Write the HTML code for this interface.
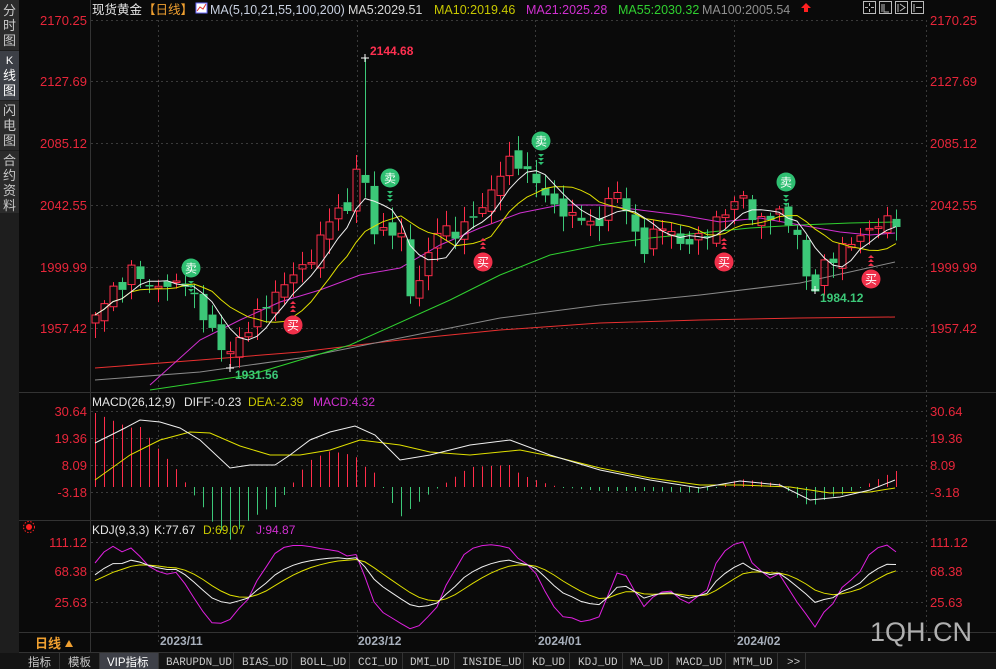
<!DOCTYPE html>
<html><head><meta charset="utf-8"><style>
html,body{margin:0;padding:0;background:#0a0a0a;width:996px;height:669px;overflow:hidden}
svg{display:block}
text{font-family:"Liberation Sans","Noto Sans CJK SC",sans-serif}
text.mono{font-family:"Liberation Mono","DejaVu Sans Mono",monospace}
</style></head><body>
<svg id="s" width="996" height="669" xmlns="http://www.w3.org/2000/svg">
<rect width="996" height="669" fill="#0a0a0a"/>
<rect x="0" y="0" width="19" height="653" fill="#1e1e1e"/>
<rect x="0" y="0" width="19" height="50" fill="#2b2b2b"/>
<rect x="0" y="51" width="19" height="49" fill="#3c3f46"/>
<rect x="0" y="101" width="19" height="49" fill="#2b2b2b"/>
<rect x="0" y="151" width="19" height="62" fill="#2b2b2b"/>
<g fill="#c8c8c8" font-size="13" text-anchor="middle">
<text x="9.5" y="15">分</text><text x="9.5" y="30">时</text><text x="9.5" y="45">图</text>
<text x="9.5" y="64" fill="#fff" font-size="11">K</text><text x="9.5" y="80" fill="#fff">线</text><text x="9.5" y="95" fill="#fff">图</text>
<text x="9.5" y="115">闪</text><text x="9.5" y="130">电</text><text x="9.5" y="145">图</text>
<text x="9.5" y="165">合</text><text x="9.5" y="180">约</text><text x="9.5" y="195">资</text><text x="9.5" y="210">料</text>
</g>
<g stroke="#333" stroke-width="1">
<line x1="90.5" y1="0" x2="90.5" y2="653"/>
<line x1="19" y1="392.5" x2="996" y2="392.5"/>
<line x1="19" y1="520.5" x2="996" y2="520.5"/>
<line x1="19" y1="632.5" x2="996" y2="632.5"/>
<line x1="19" y1="652.5" x2="996" y2="652.5"/>
</g>
<g stroke="#3a3a3a" stroke-dasharray="2,3">
<line x1="91" y1="20.5" x2="925" y2="20.5"/><line x1="91" y1="81.5" x2="925" y2="81.5"/>
<line x1="91" y1="143.5" x2="925" y2="143.5"/><line x1="91" y1="205.5" x2="925" y2="205.5"/>
<line x1="91" y1="267.5" x2="925" y2="267.5"/><line x1="91" y1="328.5" x2="925" y2="328.5"/>
<line x1="91" y1="411.5" x2="925" y2="411.5"/><line x1="91" y1="438.5" x2="925" y2="438.5"/>
<line x1="91" y1="465.5" x2="925" y2="465.5"/><line x1="91" y1="492.5" x2="925" y2="492.5"/>
<line x1="91" y1="542.5" x2="925" y2="542.5"/><line x1="91" y1="571.5" x2="925" y2="571.5"/>
<line x1="91" y1="602.5" x2="925" y2="602.5"/>
<line x1="158.5" y1="20" x2="158.5" y2="645"/><line x1="357.5" y1="20" x2="357.5" y2="645"/>
<line x1="535.5" y1="20" x2="535.5" y2="645"/><line x1="734.5" y1="20" x2="734.5" y2="645"/>
<line x1="926.5" y1="20" x2="926.5" y2="632"/>
</g>
<g fill="#e8263a" font-size="13" text-anchor="end">
<text x="87" y="25">2170.25</text><text x="87" y="86">2127.69</text><text x="87" y="148">2085.12</text>
<text x="87" y="210">2042.55</text><text x="87" y="272">1999.99</text><text x="87" y="333">1957.42</text>
<text x="87" y="416">30.64</text><text x="87" y="443">19.36</text><text x="87" y="470">8.09</text><text x="87" y="497">-3.18</text>
<text x="87" y="547">111.12</text><text x="87" y="576">68.38</text><text x="87" y="607">25.63</text>
</g>
<g fill="#e8263a" font-size="13">
<text x="930" y="25">2170.25</text><text x="930" y="86">2127.69</text><text x="930" y="148">2085.12</text>
<text x="930" y="210">2042.55</text><text x="930" y="272">1999.99</text><text x="930" y="333">1957.42</text>
<text x="930" y="416">30.64</text><text x="930" y="443">19.36</text><text x="930" y="470">8.09</text><text x="930" y="497">-3.18</text>
<text x="930" y="547">111.12</text><text x="930" y="576">68.38</text><text x="930" y="607">25.63</text>
</g>
<g font-size="12.5">
<text x="92" y="14" fill="#e6e6e6">现货黄金</text>
<text x="143" y="14" fill="#f0a030">【日线】</text>
<rect x="196" y="3" width="11" height="10" fill="#fff" stroke="#6a6aff"/>
<polyline points="197,11 200,7 203,9 206,4" stroke="#e03030" fill="none"/>
<text x="210" y="14" fill="#c8d0e0">MA(5,10,21,55,100,200)</text>
<text x="348" y="14" fill="#d8d8d8">MA5:2029.51</text>
<text x="434" y="14" fill="#c8c800">MA10:2019.46</text>
<text x="526" y="14" fill="#d030d0">MA21:2025.28</text>
<text x="618" y="14" fill="#30d030">MA55:2030.32</text>
<text x="702" y="14" fill="#909090">MA100:2005.54</text>
</g>
<g font-size="12">
<text x="92" y="406" fill="#e6e6e6">MACD(26,12,9)</text>
<text x="184" y="406" fill="#e6e6e6">DIFF:-0.23</text>
<text x="248" y="406" fill="#c8c800">DEA:-2.39</text>
<text x="313" y="406" fill="#d030d0">MACD:4.32</text>
<text x="92" y="534" fill="#e6e6e6">KDJ(9,3,3)</text>
<text x="154" y="534" fill="#e6e6e6">K:77.67</text>
<text x="203" y="534" fill="#c8c800">D:69.07</text>
<text x="256" y="534" fill="#d030d0">J:94.87</text>
</g>
<path d="M806,3 L801,8 L804,8 L804,12 L808,12 L808,8 L811,8 Z" fill="#ff2020"/>
<g stroke="#bbb" fill="none">
<rect x="863.5" y="1.5" width="12" height="12"/><rect x="879.5" y="1.5" width="12" height="12"/>
<rect x="895.5" y="1.5" width="12" height="12"/><rect x="911.5" y="1.5" width="12" height="12"/>
<path d="M869.5,3v3M869.5,9v3M865,7.5h3M871,7.5h3M882,4v8M884,4v8h5M898,4v8M900,4l5,3.5l-5,3.5M914,4v8M916,7.5h6"/>
</g>
<circle cx="29" cy="527" r="3" fill="#ff2020"/><circle cx="29" cy="527" r="5.5" fill="none" stroke="#ff2020" stroke-dasharray="1.5,1.5"/>
<g id="plot"></g>
<text x="35" y="648" fill="#f0a030" font-size="13" font-weight="bold">日线</text>
<path d="M65,647 L69,640 L73,647 Z" fill="#f0a030"/>
<line x1="90.5" y1="632" x2="90.5" y2="653" stroke="#333"/>
<g fill="#a8b0bc" font-size="12" font-weight="bold">
<text x="160" y="645">2023/11</text><text x="358" y="645">2023/12</text><text x="538" y="645">2024/01</text><text x="737" y="645">2024/02</text>
</g>
<text x="870" y="641" fill="#b0b0b0" font-size="27">1QH.CN</text>
<rect x="0" y="653" width="996" height="16" fill="#141414"/>
<g font-size="11.5" fill="#c8c8c8">
<text x="28" y="666">指标</text><text x="68" y="666">模板</text>
<rect x="100" y="653" width="58" height="16" fill="#3e4048"/><text x="107" y="666" fill="#fff">VIP指标</text>
<g font-size="11">
<text class="mono" x="166" y="665">BARUPDN_UD</text><text class="mono" x="242" y="665">BIAS_UD</text><text class="mono" x="300" y="665">BOLL_UD</text>
<text class="mono" x="358" y="665">CCI_UD</text><text class="mono" x="410" y="665">DMI_UD</text><text class="mono" x="462" y="665">INSIDE_UD</text>
<text class="mono" x="532" y="665">KD_UD</text><text class="mono" x="578" y="665">KDJ_UD</text><text class="mono" x="630" y="665">MA_UD</text>
<text class="mono" x="676" y="665">MACD_UD</text><text class="mono" x="733" y="665">MTM_UD</text><text class="mono" x="787" y="665">&gt;&gt;</text>
</g>
</g>
<g stroke="#333">
<line x1="59.5" y1="653" x2="59.5" y2="669"/><line x1="99.5" y1="653" x2="99.5" y2="669"/>
<line x1="158.5" y1="653" x2="158.5" y2="669"/><line x1="233.5" y1="653" x2="233.5" y2="669"/>
<line x1="291.5" y1="653" x2="291.5" y2="669"/><line x1="349.5" y1="653" x2="349.5" y2="669"/>
<line x1="402.5" y1="653" x2="402.5" y2="669"/><line x1="454.5" y1="653" x2="454.5" y2="669"/>
<line x1="523.5" y1="653" x2="523.5" y2="669"/><line x1="569.5" y1="653" x2="569.5" y2="669"/>
<line x1="622.5" y1="653" x2="622.5" y2="669"/><line x1="668.5" y1="653" x2="668.5" y2="669"/>
<line x1="725.5" y1="653" x2="725.5" y2="669"/><line x1="777.5" y1="653" x2="777.5" y2="669"/>
<line x1="805.5" y1="653" x2="805.5" y2="669"/>
</g>
</svg>
<script>
(function(){
var NS="http://www.w3.org/2000/svg",g=document.getElementById("plot");
function el(t,a,p){var e=document.createElementNS(NS,t);for(var k in a)e.setAttribute(k,a[k]);(p||g).appendChild(e);return e;}
function interp(pts,x){for(var i=0;i<pts.length-1;i++){var a=pts[i],b=pts[i+1];if(x>=a[0]&&x<=b[0]){return a[1]+(b[1]-a[1])*(x-a[0])/(b[0]-a[0]);}}return x<pts[0][0]?pts[0][1]:pts[pts.length-1][1];}
var kp=[[95,315],[105,300],[113,290],[122,285],[131,270],[140,275],[150,290],[160,285],[175,285],[185,282],[195,300],[205,320],[215,335],[222,352],[230,350],[240,340],[250,325],[260,310],[270,300],[280,290],[290,275],[300,270],[310,260],[320,240],[330,215],[340,210],[350,210],[356,168],[366,188],[375,235],[385,232],[400,230],[410,295],[420,278],[430,250],[440,220],[450,238],[460,230],[470,218],[480,210],[490,195],[500,172],[510,160],[520,165],[530,176],[540,185],[550,205],[560,210],[570,218],[580,215],[590,225],[600,224],[610,192],[620,196],[630,215],[640,258],[650,236],[660,226],[670,230],[680,246],[690,240],[700,238],[710,230],[720,215],[730,210],[740,190],[750,215],[760,222],[770,215],[780,213],[790,225],[800,240],[806,278],[815,288],[825,262],[835,257],[845,244],[855,240],[865,233],[875,225],[885,220],[895,222]];
var N=90,xs=[],C=[],O=[],H=[],L=[];
for(var i=0;i<N;i++){var x=95+i*9;xs.push(x);var c=interp(kp,x)+Math.sin(i*2.7)*5;C.push(c);}
for(i=0;i<N;i++){var o=i?C[i-1]+Math.sin(i*1.3)*6:C[0]+8;O.push(o);var hi=Math.min(o,C[i])-3-Math.abs(Math.sin(i*3.1))*12;var lo=Math.max(o,C[i])+3+Math.abs(Math.cos(i*2.3))*12;H.push(hi);L.push(lo);}
var ih=Math.round((365-95)/9);H[ih]=58;var il=Math.round((230-95)/9);L[il]=368;var il2=Math.round((815-95)/9);L[il2]=290;
function line(pts,col,w){el("polyline",{points:pts.map(function(p){return p[0].toFixed(1)+","+p[1].toFixed(1)}).join(" "),fill:"none",stroke:col,"stroke-width":w||1});}
line([[95,368],[200,360],[300,352],[400,340],[500,330],[600,323],[700,320],[800,318],[895,317]],"#e83030");
line([[95,380],[200,372],[300,358],[400,338],[500,318],[600,305],[700,295],[800,283],[895,262]],"#8a8a8a");
line([[150,390],[250,375],[350,345],[450,300],[500,275],[550,255],[600,245],[650,238],[700,233],[750,228],[800,225],[850,223],[895,222]],"#30d030");
line([[150,385],[200,340],[240,320],[280,302],[320,290],[360,275],[400,268],[440,245],[480,228],[520,213],[560,205],[600,205],[640,210],[680,215],[720,222],[760,218],[800,225],[840,232],[870,235],[895,233]],"#d030d0");
for(i=0;i<N;i++){var x=xs[i],up=C[i]<O[i],col=up?"#ff2d4a":"#3cc878";var t=Math.min(O[i],C[i]),b=Math.max(O[i],C[i]);if(b-t<1.5)b=t+1.5;
el("line",{x1:x+0.5,y1:H[i],x2:x+0.5,y2:t,stroke:col});el("line",{x1:x+0.5,y1:b,x2:x+0.5,y2:L[i],stroke:col});
if(up)el("rect",{x:x-3,y:t,width:7,height:b-t,fill:"none",stroke:col});else el("rect",{x:x-3.5,y:t,width:8,height:b-t,fill:col});}
function ma(n){var r=[];for(var i=0;i<N;i++){var s=0,k=0;for(var j=Math.max(0,i-n+1);j<=i;j++){s+=C[j];k++;}r.push([xs[i],s/k]);}return r;}
line(ma(10),"#e0e000");line(ma(5),"#f0f0f0");
el("text",{x:370,y:55,fill:"#ff3050","font-size":12,"font-weight":"bold"}).textContent="2144.68";
el("path",{d:"M361,58h8M365,54v8",stroke:"#fff"});
el("text",{x:235,y:379,fill:"#3cc878","font-size":12,"font-weight":"bold"}).textContent="1931.56";
el("path",{d:"M226,368h8M230,364v8",stroke:"#fff"});
el("text",{x:820,y:302,fill:"#3cc878","font-size":12,"font-weight":"bold"}).textContent="1984.12";
el("path",{d:"M811,290h8M815,286v8",stroke:"#fff"});
[[191,268],[390,178],[541,141],[786,182]].forEach(function(p){el("circle",{cx:p[0],cy:p[1],r:9.5,fill:"#2fbf72"});var t=el("text",{x:p[0],y:p[1]+4.5,fill:"#fff","font-size":12,"text-anchor":"middle"});t.textContent="卖";
for(var k=0;k<3;k++)el("path",{d:"M"+(p[0]-3)+","+(p[1]+13+k*4)+"h6l-3,3z",fill:"#2fbf72"});});
[[293,325],[483,262],[724,262],[871,279]].forEach(function(p){el("circle",{cx:p[0],cy:p[1],r:9.5,fill:"#f0304a"});var t=el("text",{x:p[0],y:p[1]+4.5,fill:"#fff","font-size":12,"text-anchor":"middle"});t.textContent="买";
for(var k=0;k<3;k++)el("path",{d:"M"+(p[0]-3)+","+(p[1]-13-k*4)+"h6l-3,-3z",fill:"#f0304a"});});
var dif=[[95,443],[125,428],[140,420],[160,422],[180,428],[200,440],[230,468],[250,465],[275,465],[290,455],[310,440],[330,432],[355,426],[375,435],[400,460],[430,455],[470,445],[510,440],[550,455],[600,470],[650,480],[700,488],[740,481],[780,485],[810,500],[840,497],[870,490],[895,480]];
var dea=[[95,480],[130,455],[160,440],[190,432],[210,433],[240,446],[270,455],[300,455],[330,450],[360,440],[400,445],[430,452],[470,455],[520,450],[560,458],[600,468],[650,478],[700,485],[740,485],[790,487],[830,493],[870,492],[895,488]];
for(i=0;i<N;i++){var x=xs[i],d=interp(dea,x)-interp(dif,x),h=2*d;if(Math.abs(h)<1)h=h<0?-1:1;
el("line",{x1:x+0.5,y1:487,x2:x+0.5,y2:487-h,stroke:h>0?"#ff2d4a":"#3cc878"});}
line(dea,"#e0e000");line(dif,"#f0f0f0");
var K=[],D=[],J=[],k0=50,d0=50;
for(i=0;i<N;i++){var hh=1e9,ll=-1e9;for(var j=Math.max(0,i-8);j<=i;j++){hh=Math.min(hh,H[j]);ll=Math.max(ll,L[j]);}
var rsv=ll==hh?50:(ll-C[i])/(ll-hh)*100;k0=(2*k0+rsv)/3;d0=(2*d0+k0)/3;var jj=3*k0-2*d0;
function ky(v){return Math.max(523,Math.min(631,571+(68.38-v)*0.69));}
K.push([xs[i],ky(k0)]);D.push([xs[i],ky(d0)]);J.push([xs[i],ky(jj)]);}
line(J,"#e020e0");line(D,"#e0e000");line(K,"#f0f0f0");
})();
</script>
</body></html>
